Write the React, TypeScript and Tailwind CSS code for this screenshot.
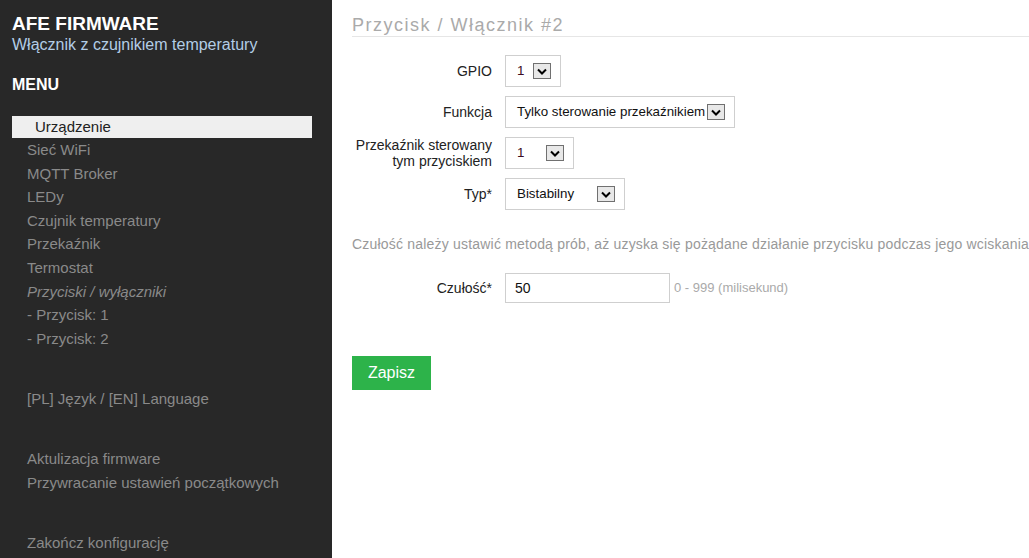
const font = { fontFamily: '"Liberation Sans", Arial, sans-serif' };

function Chevron() {
  return (
    <span className="flex h-[16px] w-[18px] shrink-0 items-center justify-center border border-[#707070] bg-[#e8e8e8]">
      <svg width="10" height="7" viewBox="0 0 10 7">
        <path d="M1 1.5 L5 5.5 L9 1.5" fill="none" stroke="#000" strokeWidth="2" />
      </svg>
    </span>
  );
}

function Select({ value, width, red }: { value: string; width: string; red?: boolean }) {
  return (
    <div className={`flex h-[32px] items-center justify-between border border-[#cfcfcf] bg-white pl-[11px] pr-[9px] ${width}`}>
      <span className={`whitespace-nowrap text-[13.33px] ${red ? 'text-[#3c0c22]' : 'text-[#111]'}`}>{value}</span>
      <Chevron />
    </div>
  );
}

function Row({ label, children }: { label: React.ReactNode; children: React.ReactNode }) {
  return (
    <div className="flex items-center">
      <div className="w-[153px] pr-[13px] text-right text-[14px] leading-[16px] text-[#222]">{label}</div>
      {children}
    </div>
  );
}

const menu = [
  'Sieć WiFi',
  'MQTT Broker',
  'LEDy',
  'Czujnik temperatury',
  'Przekaźnik',
  'Termostat',
];

export default function App() {
  return (
    <div className="flex h-[558px] w-[1029px] overflow-hidden bg-white" style={font}>
      <aside className="flex w-[332px] shrink-0 flex-col bg-[#282828] px-3 pt-[14px]">
        <div className="text-[19px] font-bold leading-[20px] text-white">AFE FIRMWARE</div>
        <div className="text-[16px] leading-[22px] text-[#b3cde6]">Włącznik z czujnikiem temperatury</div>
        <div className="mt-[18px] text-[16px] font-bold leading-[22px] text-white">MENU</div>
        <nav className="mr-[8px] mt-[20px] flex flex-col text-[15px] leading-[23.6px] text-[#8a8a8a]">
          <div className="h-[22px] bg-[#efefef] pl-[23px] leading-[22px] text-[#222]">Urządzenie</div>
          {menu.map((m) => (
            <div key={m} className="pl-[15px]">{m}</div>
          ))}
          <div className="pl-[15px] italic">Przyciski / wyłączniki</div>
          <div className="pl-[15px]">- Przycisk: 1</div>
          <div className="pl-[15px]">- Przycisk: 2</div>
          <div className="mt-[37px] pl-[15px]">[PL] Język / [EN] Language</div>
          <div className="mt-[36.4px] pl-[15px]">Aktulizacja firmware</div>
          <div className="pl-[15px]">Przywracanie ustawień początkowych</div>
          <div className="mt-[36.4px] pl-[15px]">Zakończ konfigurację</div>
        </nav>
      </aside>
      <main className="flex min-w-0 flex-1 flex-col pl-[20px] pt-[15px]">
        <h1 className="border-b border-[#e6e6e6] pb-[1px] text-[18px] leading-[20px] tracking-[1.5px] text-[#aaa]">
          Przycisk / Włącznik #2
        </h1>
        <div className="mt-[18px] flex flex-col gap-[9px]">
          <Row label="GPIO">
            <Select value="1" width="w-[56px]" red />
          </Row>
          <Row label="Funkcja">
            <Select value="Tylko sterowanie przekaźnikiem" width="w-[230px]" />
          </Row>
          <Row label={<>Przekaźnik sterowany<br />tym przyciskiem</>}>
            <Select value="1" width="w-[69px]" red />
          </Row>
          <Row label="Typ*">
            <Select value="Bistabilny" width="w-[120px]" />
          </Row>
        </div>
        <p className="mt-[25px] whitespace-nowrap text-[14px] leading-[18px] tracking-[0.2px] text-[#999]">
          Czułość należy ustawić metodą prób, aż uzyska się pożądane działanie przycisku podczas jego wciskania
        </p>
        <div className="mt-[20px]">
          <Row label="Czułość*">
            <div className="flex h-[30px] w-[165px] items-center border border-[#cfcfcf] pl-[9px] text-[14px] text-[#111]">50</div>
            <span className="ml-[4px] text-[13px] text-[#aaa]">0 - 999 (milisekund)</span>
          </Row>
        </div>
        <div className="mt-[53px]">
          <button className="h-[34px] w-[79px] bg-[#2db34a] text-[16px] text-white">Zapisz</button>
        </div>
      </main>
    </div>
  );
}
